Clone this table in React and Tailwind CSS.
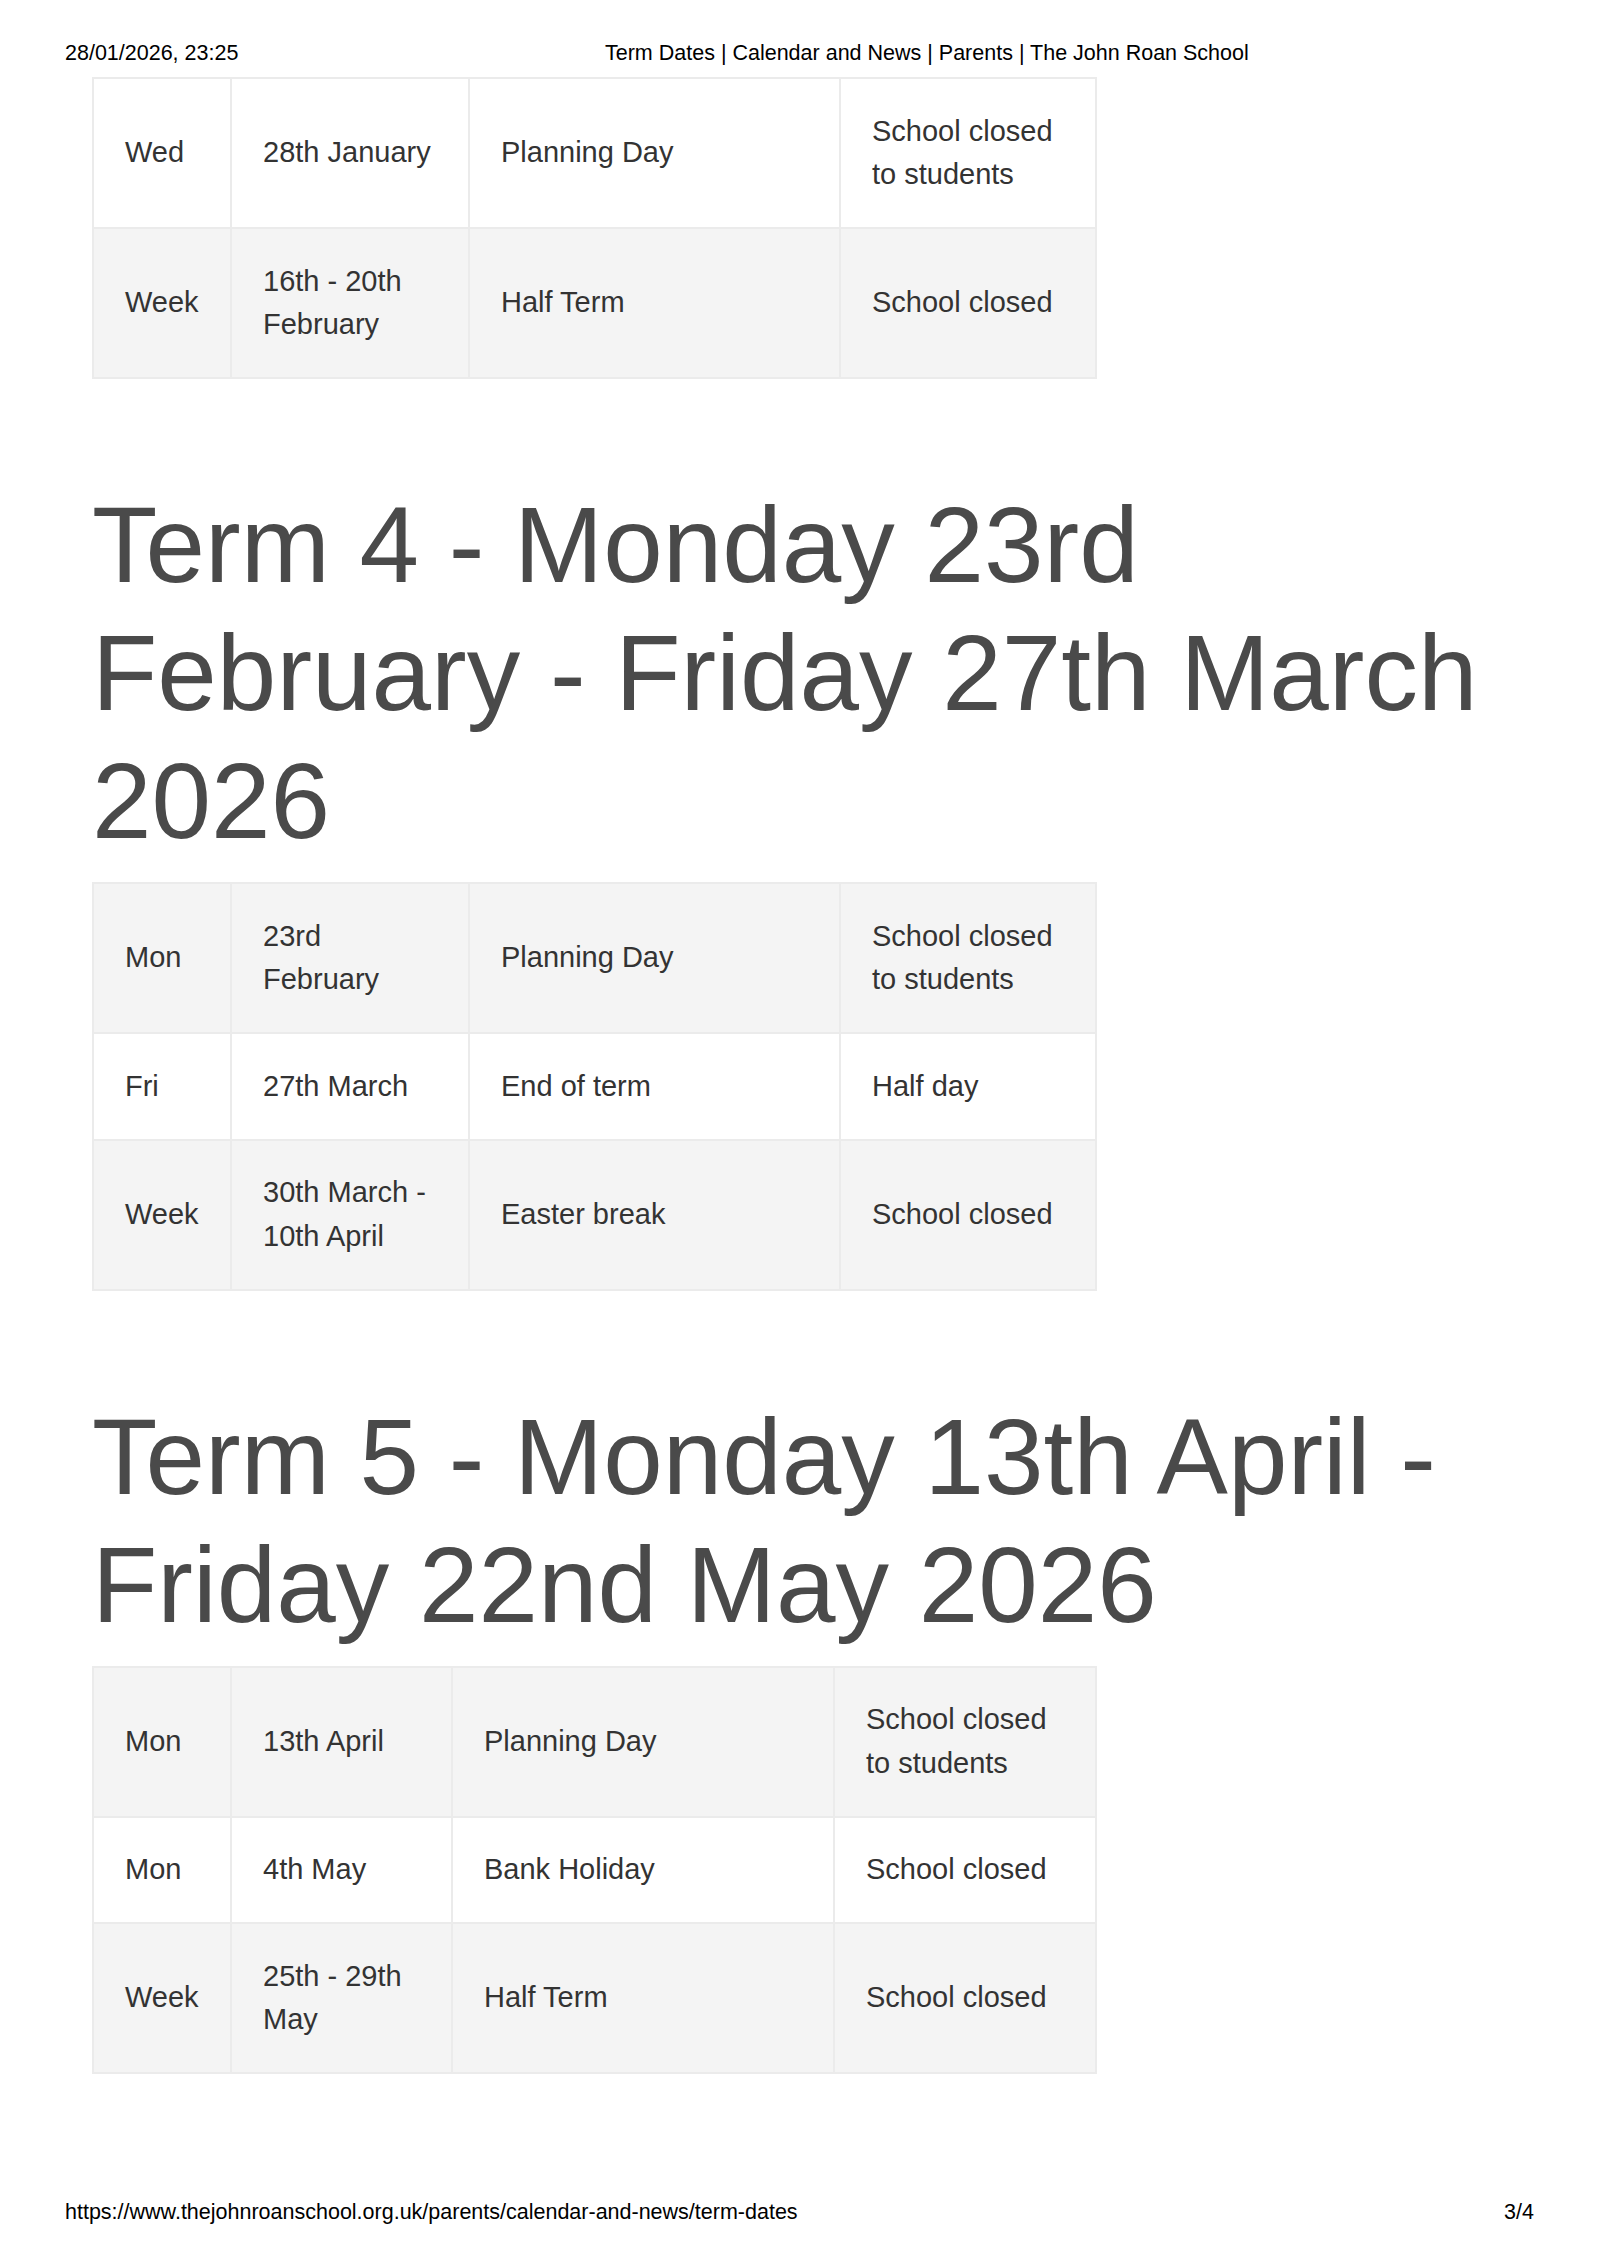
const sections = [
  {
    title: null,
    cols: [138, 238, 371, 256],
    startGray: false,
    rows: [
      ["Wed", "28th January", "Planning Day", "School closed to students"],
      ["Week", "16th - 20th February", "Half Term", "School closed"],
    ],
  },
  {
    title: "Term 4 - Monday 23rd February - Friday 27th March 2026",
    cols: [138, 238, 371, 256],
    startGray: true,
    rows: [
      ["Mon", "23rd February", "Planning Day", "School closed to students"],
      ["Fri", "27th March", "End of term", "Half day"],
      ["Week", "30th March - 10th April", "Easter break", "School closed"],
    ],
  },
  {
    title: "Term 5 - Monday 13th April - Friday 22nd May 2026",
    cols: [138, 221, 382, 262],
    startGray: true,
    rows: [
      ["Mon", "13th April", "Planning Day", "School closed to students"],
      ["Mon", "4th May", "Bank Holiday", "School closed"],
      ["Week", "25th - 29th May", "Half Term", "School closed"],
    ],
  },
];

const TermTable = ({ cols, rows, startGray }) => (
  <table className="table-fixed border-collapse w-[1003px] text-[29px] leading-[43.5px] text-[#333333]">
    <colgroup>
      {cols.map((w, i) => (
        <col key={i} style={{ width: w }} />
      ))}
    </colgroup>
    <tbody>
      {rows.map((row, i) => {
        const gray = startGray ? i % 2 === 0 : i % 2 === 1;
        return (
          <tr key={i} className={gray ? "bg-[#f4f4f4]" : "bg-white"}>
            {row.map((cell, j) => (
              <td
                key={j}
                className="border-2 border-[#ebebeb] px-[31px] py-[30.5px] align-middle"
              >
                {cell}
              </td>
            ))}
          </tr>
        );
      })}
    </tbody>
  </table>
);

export default function App() {
  return (
    <div className="w-[1600px] h-[2264px] bg-white flex flex-col font-['Liberation_Sans',Arial,sans-serif] text-black">
      <div className="flex pt-[41px] pl-[65px] text-[21.5px] leading-[24px]">
        <div className="w-[540px]">28/01/2026, 23:25</div>
        <div>Term Dates | Calendar and News | Parents | The John Roan School</div>
      </div>

      <div className="pl-[92px] pt-[12px]">
        {sections.map((s, i) => (
          <div key={i}>
            {s.title && (
              <h1 className="w-[1416px] mt-[102px] mb-[17px] text-[107px] leading-[128px] font-normal text-[#4a4a4a]">
                {s.title}
              </h1>
            )}
            <TermTable cols={s.cols} rows={s.rows} startGray={s.startGray} />
          </div>
        ))}
      </div>

      <div className="mt-auto flex justify-between pl-[65px] pr-[66px] pb-[40px] text-[21.5px] leading-[24px]">
        <div>https://www.thejohnroanschool.org.uk/parents/calendar-and-news/term-dates</div>
        <div>3/4</div>
      </div>
    </div>
  );
}
